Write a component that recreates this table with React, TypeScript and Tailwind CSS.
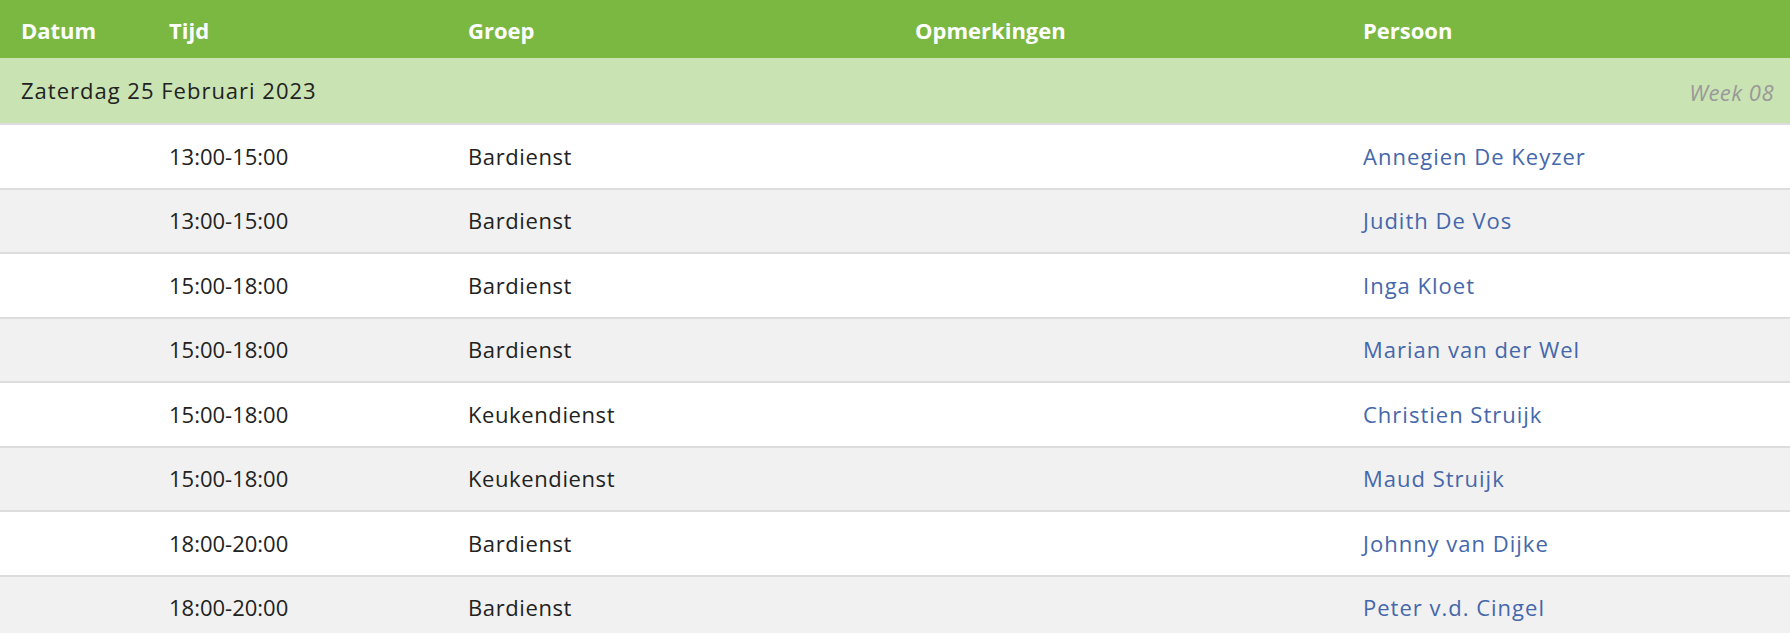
const rows = [
  { tijd: '13:00-15:00', groep: 'Bardienst', persoon: 'Annegien De Keyzer' },
  { tijd: '13:00-15:00', groep: 'Bardienst', persoon: 'Judith De Vos' },
  { tijd: '15:00-18:00', groep: 'Bardienst', persoon: 'Inga Kloet' },
  { tijd: '15:00-18:00', groep: 'Bardienst', persoon: 'Marian van der Wel' },
  { tijd: '15:00-18:00', groep: 'Keukendienst', persoon: 'Christien Struijk' },
  { tijd: '15:00-18:00', groep: 'Keukendienst', persoon: 'Maud Struijk' },
  { tijd: '18:00-20:00', groep: 'Bardienst', persoon: 'Johnny van Dijke' },
  { tijd: '18:00-20:00', groep: 'Bardienst', persoon: 'Peter v.d. Cingel' },
];

const cols = 'grid grid-cols-[148px_299px_447px_448px_1fr]';

export default function App() {
  return (
    <div className="w-full bg-white font-['Open_Sans',sans-serif] text-[22px] text-[#222]">
      {/* header */}
      <div className={`${cols} h-[58px] items-center bg-[#7ab842] pt-[2px] font-bold text-white`}>
        <div className="pl-[21px]">Datum</div>
        <div className="pl-[21px]">Tijd</div>
        <div className="pl-[21px]">Groep</div>
        <div className="pl-[21px]">Opmerkingen</div>
        <div className="pl-[21px]">Persoon</div>
      </div>

      {/* day */}
      <div className="flex h-[65px] items-center justify-between bg-[#c9e3b3] pl-[21px] pr-[16px]">
        <span className="tracking-[1px]">Zaterdag 25 Februari 2023</span>
        <span className="pt-[3px] text-[22px] italic tracking-[0.5px] text-[#999]">Week 08</span>
      </div>

      {rows.map((row, i) => (
        <div
          key={i}
          className={`${cols} h-[64.5px] items-center border-t-2 border-[#ddd] tracking-[0.6px] ${i % 2 ? 'bg-[#f1f1f1]' : 'bg-white'}`}
        >
          <div className="pl-[21px]"></div>
          <div className="pl-[21px] tracking-normal">{row.tijd}</div>
          <div className="pl-[21px]">{row.groep}</div>
          <div className="pl-[21px]"></div>
          <div className="pl-[21px] tracking-[1px] text-[#4567ab]">{row.persoon}</div>
        </div>
      ))}
    </div>
  );
}
